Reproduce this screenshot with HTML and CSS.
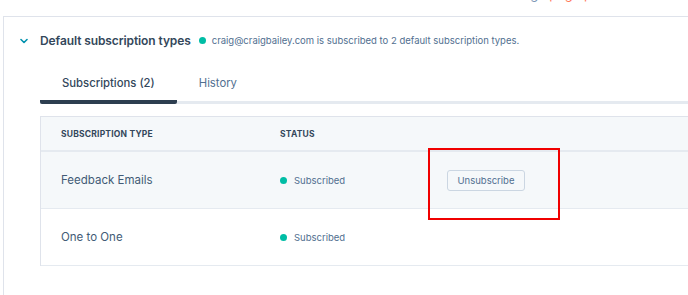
FILE: index.html
```html
<!DOCTYPE html>
<html>
<head>
  <link rel="stylesheet" href="styles.css">
</head>
<body>
  <!-- top strip, mostly scrolled out of view -->
  <div class="top-strip">
    <p class="top-text">Manage <span class="top-link">page preferences</span></p>
  </div>

  <div class="card">
    <div class="section-head">
      <svg class="chevron" width="8" height="6" viewBox="0 0 8 6">
        <path d="M1 1.5 L4 4.5 L7 1.5" fill="none" stroke="#0091ae" stroke-width="1.6" stroke-linecap="round" stroke-linejoin="round"/>
      </svg>
      <span class="section-title">Default subscription types</span>
      <span class="dot"></span>
      <span class="section-note">craig@craigbailey.com is subscribed to 2 default subscription types.</span>
    </div>

    <div class="tabs">
      <div class="tab active">Subscriptions (2)</div>
      <div class="tab">History</div>
    </div>

    <div class="sub-table">
      <div class="row head">
        <div class="cell">Subscription type</div>
        <div class="cell">Status</div>
        <div class="cell"></div>
      </div>
      <div class="row hover">
        <div class="cell name">Feedback Emails</div>
        <div class="cell status"><span class="dot"></span>Subscribed</div>
        <div class="cell"><button class="unsub-btn">Unsubscribe</button></div>
      </div>
      <div class="row">
        <div class="cell name">One to One</div>
        <div class="cell status"><span class="dot"></span>Subscribed</div>
        <div class="cell"></div>
      </div>
    </div>
  </div>

  <div class="highlight-box"></div>
</body>
</html>
```

FILE: styles.css
```css
body {
  margin: 0;
  background: #fff;
  font-family: 'Inter', 'Noto Sans', sans-serif;
  color: #33475b;
  position: relative;
  overflow: hidden;
  height: 295px;
}

.top-strip {
  height: 16px;
  overflow: hidden;
  text-align: right;
  padding-right: 30px;
}

.top-text {
  margin: -14px 0 0;
  font-size: 13px;
  line-height: 16px;
  color: #7c98b6;
}

.top-link {
  color: #ff7a59;
}

.card {
  margin-left: 3px;
  border-top: 1px solid #dfe3eb;
  border-left: 1px solid #dfe3eb;
  padding: 13px 0 0 36px;
  height: 265px;
}

.section-head {
  display: flex;
  align-items: center;
  height: 20px;
  margin-left: -20px;
}

.chevron {
  margin-right: 12px;
  margin-top: 1px;
}

.section-title {
  font-size: 12px;
  font-weight: 600;
  letter-spacing: -0.1px;
  margin-right: 8px;
}

.dot {
  display: inline-block;
  width: 7px;
  height: 7px;
  border-radius: 50%;
  background: #00bda5;
  flex-shrink: 0;
}

.section-note {
  margin-left: 6px;
  font-size: 9.5px;
  color: #516f90;
}

.tabs {
  display: flex;
  align-items: flex-start;
  margin-top: 10px;
  border-bottom: 3px solid #e5eaf0;
  height: 41px;
}

.tab {
  box-sizing: border-box;
  height: 41px;
  padding: 4px 22px 0;
  font-size: 11.3px;
  line-height: 38px;
  color: #516f90;
}

.tab.active {
  height: 44px;
  color: #33475b;
  font-weight: 500;
  border-bottom: 4px solid #2d3e50;
  border-radius: 2px;
}

.sub-table {
  margin-top: 12px;
  border-top: 1px solid #dfe3eb;
  border-left: 1px solid #dfe3eb;
}

.row {
  display: grid;
  grid-template-columns: 219px 167px 1fr;
  align-items: center;
  height: 56px;
  border-bottom: 1px solid #e5eaf0;
}

.row.head {
  height: 33px;
  background: #f5f8fa;
  border-bottom: 2px solid #e5eaf0;
}

.row.head .cell {
  font-size: 8.5px;
  font-weight: 700;
  text-transform: uppercase;
  letter-spacing: 0.2px;
  color: #33475b;
}

.row.hover {
  background: #f5f8fa;
}

.cell {
  padding-left: 20px;
  font-size: 11.5px;
}

.cell.name {
  color: #425b76;
}

.cell.status {
  display: flex;
  align-items: center;
  gap: 7px;
  font-size: 9.5px;
  color: #516f90;
}

.unsub-btn {
  font-family: inherit;
  font-size: 9.5px;
  color: #516f90;
  background: #f5f8fa;
  border: 1px solid #cbd6e2;
  border-radius: 3px;
  height: 21px;
  width: 78px;
  padding: 0;
}

.highlight-box {
  position: absolute;
  left: 428px;
  top: 148px;
  width: 128px;
  height: 68px;
  border: 2px solid #f00000;
}
```
